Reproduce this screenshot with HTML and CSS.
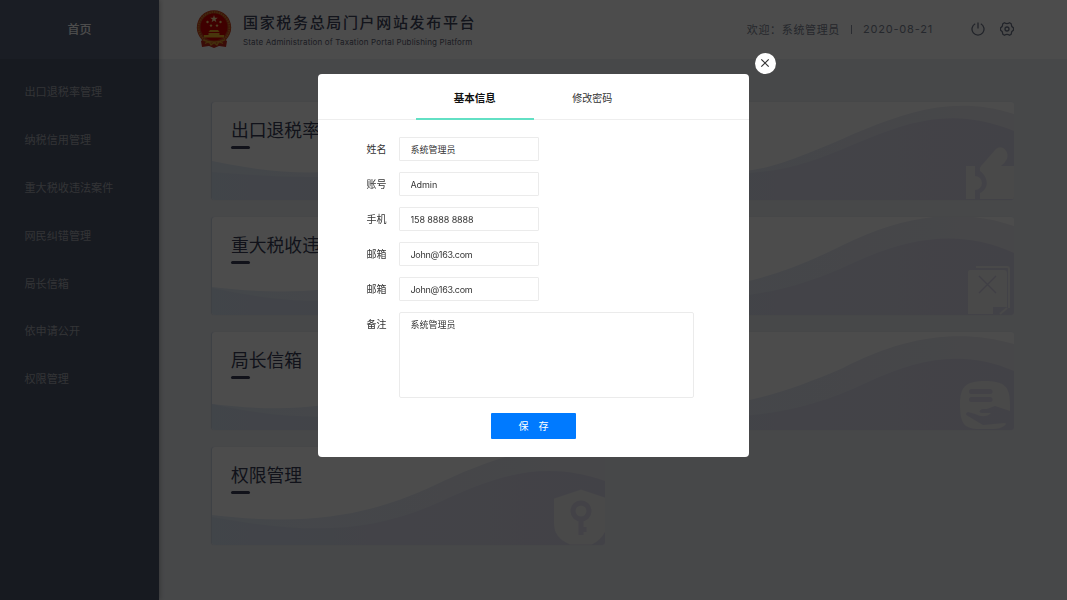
FILE: index.html
```
<!DOCTYPE html>
<html lang="zh-CN">
<head>
    <meta charset="UTF-8">
    <meta name="viewport" content="width=device-width, initial-scale=1.0">
    <title>国家税务总局门户网站发布平台</title>
    <link rel="stylesheet" href="styles.css">
</head>
<body>
    <!-- Shared gradients for the card waves -->
    <svg class="defs" width="0" height="0">
        <defs>
            <linearGradient id="wave-back" x1="0" x2="1" y1="0" y2="0">
                <stop offset="0" stop-color="#e4edf8" />
                <stop offset="0.6" stop-color="#e9ecf6" />
                <stop offset="1" stop-color="#efeef3" />
            </linearGradient>
            <linearGradient id="wave-front" x1="0" x2="1" y1="0" y2="0">
                <stop offset="0" stop-color="#dbe6f5" />
                <stop offset="0.5" stop-color="#e0e1f0" />
                <stop offset="1" stop-color="#dedcee" />
            </linearGradient>
        </defs>
    </svg>

    <!-- Sidebar -->
    <div id="sidebar">
        <div class="home">首页</div>
        <ul class="menu">
            <li>出口退税率管理</li>
            <li>纳税信用管理</li>
            <li>重大税收违法案件</li>
            <li>网民纠错管理</li>
            <li>局长信箱</li>
            <li>依申请公开</li>
            <li>权限管理</li>
        </ul>
    </div>

    <!-- Main content -->
    <div id="main-content">
        <header class="header">
            <svg class="emblem" viewBox="0 0 36 38">
                <path d="M8 29 L28 29 L31 31 L30 37 L23 36 L18 38 L13 36 L6 37 L5 31 Z" fill="#c4281c" />
                <circle cx="18" cy="17.5" r="17.2" fill="#c9401e" />
                <circle cx="18" cy="17.5" r="15.4" fill="none" stroke="#d9822b" stroke-width="2" stroke-dasharray="1.6 0.8" />
                <circle cx="18" cy="17" r="13.4" fill="#d40000" />
                <path d="M18 5 L18.9 7.8 L21.8 7.8 L19.5 9.5 L20.4 12.3 L18 10.6 L15.6 12.3 L16.5 9.5 L14.2 7.8 L17.1 7.8 Z" fill="#ffe9a8" />
                <g fill="#ffd777">
                    <circle cx="11.5" cy="12" r="1.2" />
                    <circle cx="24.5" cy="12" r="1.2" />
                    <circle cx="15" cy="15.6" r="1.2" />
                    <circle cx="21" cy="15.6" r="1.2" />
                </g>
                <path d="M14 20 H22 L23.5 22 H12.5 Z M12.5 23 H23.5 V25 H28 V27.5 H8 V25 H12.5 Z" fill="#f0b429" />
                <path d="M7 30 Q18 34 29 30 M9 33.5 L13 31.5 L15 35 L18 32.5 L21 35 L23 31.5 L27 33.5" fill="none" stroke="#e0a02b" stroke-width="1.2" />
            </svg>
            <div class="brand">
                <h1>国家税务总局门户网站发布平台</h1>
                <p>State Administration of Taxation Portal Publishing Platform</p>
            </div>
            <div class="user-info">
                <span class="welcome">欢迎：系统管理员</span>
                <span class="divider"></span>
                <span class="date">2020-08-21</span>
            </div>
            <svg class="icon power" viewBox="0 0 14 14">
                <path d="M4.2 1.8 A6 6 0 1 0 9.8 1.8 M7 0.6 V6.6" />
            </svg>
            <svg class="icon gear" viewBox="0 0 14 14">
                <path d="M4.4 0.8 Q7 2.4 9.6 0.8 L11.2 1.8 Q11.1 4.6 13.5 5.9 V8.1 Q11.1 9.4 11.2 12.2 L9.6 13.2 Q7 11.6 4.4 13.2 L2.8 12.2 Q2.9 9.4 0.5 8.1 V5.9 Q2.9 4.6 2.8 1.8 Z" />
                <circle cx="7" cy="7" r="2" />
            </svg>
        </header>

        <div class="cards">
            <div class="card">
                <svg class="wave" viewBox="0 0 393 98">
                    <path d="M0 59 C100 80 170 73 252 30 C300 4 345 -4 393 12 V98 H0 Z" fill="url(#wave-back)" />
                    <path d="M0 70 C100 78 170 82 252 38 C300 14 345 8 393 29 V98 H0 Z" fill="url(#wave-front)" />
                </svg>
                <h2>出口退税率管理</h2>
            </div>
            <div class="card">
                <svg class="wave" viewBox="0 0 393 98">
                    <path d="M0 59 C50 74 100 77 150 64 C230 42 300 -18 393 12 V98 H0 Z" fill="url(#wave-back)" />
                    <path d="M0 71 C80 73 120 75 165 66 C245 48 300 -9 393 29 V98 H0 Z" fill="url(#wave-front)" />
                    <!-- Puzzle and hand -->
                    <g class="shape">
                        <path d="M345 64 H354 V74 A7 7 0 0 1 354 88 V97 H345 Z" />
                        <path d="M359 97 V91 C368 87 368 76 359 69 Q358 66 360 64 L374 48 C380 41 389 49 386 57 Q384 61 380 64 H393 V97 Z" />
                    </g>
                </svg>
                <h2>纳税信用管理</h2>
            </div>
            <div class="card">
                <svg class="wave" viewBox="0 0 393 98">
                    <path d="M0 70 C100 82 170 70 240 31 C290 2 340 -10 393 9 V98 H0 Z" fill="url(#wave-back)" />
                    <path d="M0 71 C110 94 160 86 245 47 C300 18 345 14 393 36 V98 H0 Z" fill="url(#wave-front)" />
                </svg>
                <h2>重大税收违法</h2>
            </div>
            <div class="card">
                <svg class="wave" viewBox="0 0 393 98">
                    <path d="M0 70 C90 80 150 64 222 28 C285 -3 340 -9 393 9 V98 H0 Z" fill="url(#wave-back)" />
                    <path d="M0 71 C90 90 160 80 230 47 C290 19 340 12 393 36 V98 H0 Z" fill="url(#wave-front)" />
                    <!-- Rejected document -->
                    <g>
                        <path class="line" d="M355 50 H386 Q388 50 388 52 V91" />
                        <path class="shape" d="M349 53 H383 Q386 53 386 56 V90 H372 V97 H347 V55 Q347 53 349 53 Z" />
                        <path class="mark" d="M358 59 L375 76 M375 59 L358 76" />
                        <path class="line" d="M379 97 L386 91" />
                    </g>
                </svg>
                <h2>网民纠错管理</h2>
            </div>
            <div class="card">
                <svg class="wave" viewBox="0 0 393 98">
                    <path d="M0 72 C100 84 160 70 240 32 C290 8 345 -3 393 12 V98 H0 Z" fill="url(#wave-back)" />
                    <path d="M0 72 C100 94 170 87 245 54 C300 26 345 18 393 39 V98 H0 Z" fill="url(#wave-front)" />
                </svg>
                <h2>局长信箱</h2>
            </div>
            <div class="card">
                <svg class="wave" viewBox="0 0 393 98">
                    <path d="M0 72 C90 84 150 67 222 36 C285 3 340 -3 393 12 V98 H0 Z" fill="url(#wave-back)" />
                    <path d="M0 72 C90 94 170 87 245 51 C300 25 345 18 393 39 V98 H0 Z" fill="url(#wave-front)" />
                    <!-- Letter in hand -->
                    <path class="shape" d="M364 49 C384 49 389 55 389 72 V79 L374 74 L366 77 H361 Q356 80 361 81 H370 Q364 87 354 82 L347 80 Q343 82 347 84 L362 93 L383 91 Q387 91 383 94 Q379 97 373 97 H355 C342 96 339 89 339 73 C339 55 344 49 364 49 Z" />
                    <path class="bar" d="M350.5 59.5 H369 M350.5 67.5 H369" />
                </svg>
                <h2>依申请公开</h2>
            </div>
            <div class="card">
                <svg class="wave" viewBox="0 0 393 98">
                    <path d="M0 68 C100 80 160 67 221 39 C290 6 340 -8 393 9 V98 H0 Z" fill="url(#wave-back)" />
                    <path d="M0 70 C100 88 160 86 230 54 C290 26 335 14 393 34 V98 H0 Z" fill="url(#wave-front)" />
                    <!-- Shield with key -->
                    <path class="shape" d="M369 42.5 L393 50.5 V85 Q389 93 380 97.5 H358 Q342 91 342 77 V51.5 Z" />
                    <circle class="key" cx="369" cy="64" r="8" />
                    <path class="key" d="M369 74 V88 M369 82.5 H374.5" />
                </svg>
                <h2>权限管理</h2>
            </div>
        </div>
    </div>

    <!-- Account dialog -->
    <div id="overlay">
        <div class="modal">
            <button class="close-btn" type="button" aria-label="关闭">
                <svg viewBox="0 0 10 10"><path d="M1.3 1.3 L8.7 8.7 M8.7 1.3 L1.3 8.7" /></svg>
            </button>
            <div class="tabs">
                <div class="tab active">基本信息</div>
                <div class="tab">修改密码</div>
            </div>
            <form class="form" action="">
                <div class="row">
                    <label for="name">姓名</label>
                    <input id="name" type="text" value="系统管理员" />
                </div>
                <div class="row">
                    <label for="account">账号</label>
                    <input id="account" class="latin" type="text" value="Admin" />
                </div>
                <div class="row">
                    <label for="phone">手机</label>
                    <input id="phone" class="latin" type="text" value="158 8888 8888" />
                </div>
                <div class="row">
                    <label for="email">邮箱</label>
                    <input id="email" class="latin email" type="text" value="John@163.com" />
                </div>
                <div class="row">
                    <label for="email2">邮箱</label>
                    <input id="email2" class="latin email" type="text" value="John@163.com" />
                </div>
                <div class="row">
                    <label for="remark">备注</label>
                    <textarea id="remark">系统管理员</textarea>
                </div>
                <button class="save-btn" type="button">保 存</button>
            </form>
        </div>
    </div>
</body>
</html>
```
FILE: styles.css
```
* {
    box-sizing: border-box;
}

body {
    font-family: Inter, "Noto Sans CJK SC", sans-serif;
    margin: 0;
    display: flex;
    height: 100vh;
    overflow: hidden;
    background-color: #eef1f5;
}

h1, h2, p, ul {
    margin: 0;
    padding: 0;
}

.defs {
    position: absolute;
}

/* Sidebar */
#sidebar {
    width: 159px;
    flex-shrink: 0;
    height: 100%;
    background-color: #4d576b;
    box-shadow: 1px 0 5px rgba(0, 0, 0, 0.25);
    z-index: 1;
}

.home {
    height: 59px;
    line-height: 59px;
    text-align: center;
    font-size: 12px;
    font-weight: 500;
    color: #fff;
    background-color: #57617a;
}

.menu {
    list-style-type: none;
    padding-top: 9.4px;
}

.menu li {
    height: 47.8px;
    line-height: 48px;
    padding-left: 24.5px;
    font-size: 11.1px;
    color: #a9adb5;
}

/* Header */
#main-content {
    flex: 1;
}

.header {
    display: flex;
    align-items: center;
    height: 59px;
    padding: 0 53px 0 37px;
    background-color: #fff;
}

.emblem {
    width: 36px;
    height: 38px;
    margin: -1px 11px 0 0;
}

.brand h1 {
    font-size: 15px;
    line-height: 22px;
    font-weight: 500;
    letter-spacing: 1.66px;
    color: #41465e;
}

.brand p {
    margin-top: 2px;
    font-size: 8px;
    line-height: 12px;
    letter-spacing: 0.16px;
    white-space: nowrap;
    color: #5c6174;
}

.user-info {
    display: flex;
    align-items: center;
    margin-top: -1px;
    margin-left: auto;
    font-size: 11px;
    letter-spacing: 0.65px;
    color: #7e8696;
}

.date {
    letter-spacing: 0.8px;
}

.divider {
    width: 1px;
    height: 9px;
    margin: 0 11px;
    background-color: #8e95a3;
}

.icon {
    width: 14px;
    height: 14px;
    margin-top: -1px;
    fill: none;
    stroke: #6e7689;
    stroke-width: 1.3;
}

.power {
    margin-left: 38px;
}

.gear {
    margin-left: 15px;
}

/* Cards */
.cards {
    display: grid;
    grid-template-columns: 393px 393px;
    grid-auto-rows: 98px;
    gap: 17px 16px;
    padding: 43px 0 0 53px;
}

.card {
    position: relative;
    padding: 15px 19px;
    border-radius: 3px;
    background-color: #fff;
    box-shadow: -1px 0 1px rgba(170, 190, 215, 0.5);
    overflow: hidden;
}

.card h2 {
    position: relative;
    font-size: 17.8px;
    line-height: 28px;
    font-weight: 400;
    color: #3a3f58;
}

.card h2::after {
    content: "";
    display: block;
    width: 19px;
    height: 3px;
    margin-top: 0.5px;
    border-radius: 2px;
    background-color: #3a3f58;
}

.wave {
    position: absolute;
    left: 0;
    top: 0;
    width: 393px;
    height: 98px;
}

.shape {
    fill: #f3f3f3;
}

.line, .mark, .bar, .key {
    fill: none;
    stroke: #dfddee;
}

.line {
    stroke: #f3f3f3;
    stroke-width: 2;
}

.mark {
    stroke: #d6d4e8;
    stroke-width: 1.3;
}

.bar {
    stroke-width: 5;
    stroke-linecap: round;
}

.key {
    stroke-width: 5;
}

/* Dialog */
#overlay {
    position: fixed;
    inset: 0;
    background-color: rgba(0, 0, 0, 0.7);
    z-index: 10;
}

.modal {
    position: relative;
    width: 431px;
    height: 383px;
    margin: 74px 0 0 318px;
    border-radius: 4px;
    background-color: #fff;
}

.close-btn {
    position: absolute;
    top: -21.5px;
    right: -26.5px;
    display: flex;
    align-items: center;
    justify-content: center;
    width: 21px;
    height: 21px;
    padding: 0;
    border: none;
    border-radius: 50%;
    background-color: #fff;
}

.close-btn svg {
    width: 10px;
    height: 10px;
    fill: none;
    stroke: #333;
    stroke-width: 1.2;
}

.tabs {
    display: flex;
    justify-content: center;
    height: 46px;
    border-bottom: 1px solid #eee;
}

.tab {
    width: 117.5px;
    height: 46px;
    line-height: 49px;
    text-align: center;
    font-size: 10px;
    color: #333;
}

.tab.active {
    font-size: 10.5px;
    font-weight: 700;
    color: #111;
    border-bottom: 2px solid #62e0c4;
}

.form {
    display: flex;
    flex-direction: column;
    gap: 11px;
    padding: 17px 0 0 48.5px;
}

.row {
    display: flex;
}

.row label {
    width: 32.5px;
    line-height: 24px;
    font-size: 10px;
    color: #333;
}

input, textarea {
    width: 140px;
    height: 24px;
    padding: 0 10.5px;
    border: 1px solid #ebebeb;
    border-radius: 1px;
    outline: none;
    font-family: inherit;
    font-size: 9px;
    color: #333;
}

.latin {
    letter-spacing: -0.1px;
}

.email {
    letter-spacing: -0.3px;
}

textarea {
    width: 295px;
    height: 86px;
    padding-top: 5px;
    border-radius: 2px;
    line-height: 14px;
    resize: none;
}

.save-btn {
    width: 85px;
    height: 26px;
    margin: 4px 0 0 124.5px;
    padding: 0;
    border: none;
    border-radius: 1px;
    font-family: inherit;
    font-size: 10px;
    line-height: 24px;
    word-spacing: 7px;
    color: #fff;
    background-color: #007aff;
}
```
